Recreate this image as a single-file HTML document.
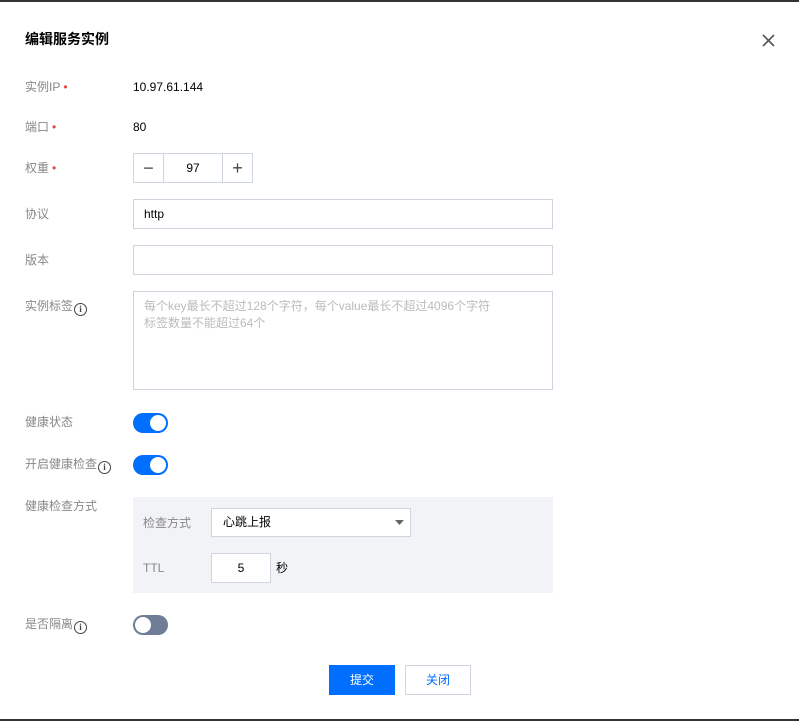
<!DOCTYPE html>
<html><head><meta charset="utf-8"><style>
*{box-sizing:border-box;margin:0;padding:0}
body{width:799px;height:721px;background:#fff;font-family:"Liberation Sans","Noto Sans CJK SC",sans-serif;font-size:12px;color:#000;position:relative;overflow:hidden}
.a{position:absolute}
.lbl{position:absolute;left:25px;color:#888;font-size:12px;line-height:16px}
.req{color:#e54545;margin-left:3px}
.val{position:absolute;left:133px;font-size:12px;line-height:16px;color:#000}
.inp{position:absolute;border:1px solid #cfd5de;background:#fff}
.sw{position:absolute;left:133px;width:35px;height:20px;border-radius:10px;background:#006eff}
.sw i{position:absolute;top:2px;right:2px;width:16px;height:16px;border-radius:50%;background:#fff}
.sw.off{background:#6f7e96}.sw.off i{left:2px;right:auto}
.info{display:inline-block;width:13px;height:13px;border:1.3px solid #444;border-radius:50%;font-size:9px;line-height:10px;text-align:center;color:#444;font-weight:bold;vertical-align:-2px;margin-left:1px;font-family:"Liberation Serif",serif}
</style></head><body>
<div class="a" style="left:0;top:0;width:799px;height:2px;background:#333"></div>
<div class="a" style="left:0;top:719px;width:799px;height:2px;background:#333"></div>
<div class="a" style="left:25px;top:30px;font-size:14px;font-weight:bold;line-height:18px">编辑服务实例</div>
<svg class="a" style="left:762px;top:34px" width="13" height="13" viewBox="0 0 13 13"><path d="M1 1L12 12M12 1L1 12" stroke="#555" stroke-width="1.6"/></svg>

<div class="lbl" style="top:79px">实例IP<span class="req">•</span></div>
<div class="val" style="top:79px">10.97.61.144</div>
<div class="lbl" style="top:119px">端口<span class="req">•</span></div>
<div class="val" style="top:119px">80</div>
<div class="lbl" style="top:160px">权重<span class="req">•</span></div>
<div class="inp" style="left:133px;top:153px;width:120px;height:30px;display:flex">
 <div style="width:30px;border-right:1px solid #cfd5de;text-align:center;line-height:28px;font-size:18px;color:#444">−</div>
 <div style="flex:1;text-align:center;line-height:28px">97</div>
 <div style="width:30px;border-left:1px solid #cfd5de;text-align:center;line-height:28px;font-size:18px;color:#444">+</div>
</div>
<div class="lbl" style="top:206px">协议</div>
<div class="inp" style="left:133px;top:199px;width:420px;height:30px;padding-left:10px;line-height:28px">http</div>
<div class="lbl" style="top:252px">版本</div>
<div class="inp" style="left:133px;top:245px;width:420px;height:30px"></div>
<div class="lbl" style="top:298px">实例标签<span class="info">i</span></div>
<div class="inp" style="left:133px;top:291px;width:420px;height:99px;padding:6px 10px;color:#bbb;line-height:17px">每个key最长不超过128个字符，每个value最长不超过4096个字符<br>标签数量不能超过64个</div>
<div class="lbl" style="top:414px">健康状态</div>
<div class="sw" style="top:413px"><i></i></div>
<div class="lbl" style="top:456px">开启健康检查<span class="info">i</span></div>
<div class="sw" style="top:455px"><i></i></div>
<div class="lbl" style="top:498px">健康检查方式</div>
<div class="a" style="left:133px;top:497px;width:420px;height:96px;background:#f2f3f6"></div>
<div class="a" style="left:143px;top:515px;color:#888;line-height:16px">检查方式</div>
<div class="inp" style="left:211px;top:508px;width:200px;height:29px;padding-left:11px;line-height:27px">心跳上报
 <svg style="position:absolute;right:6px;top:11px" width="9" height="6"><path d="M0 0H9L4.5 5Z" fill="#666"/></svg></div>
<div class="a" style="left:143px;top:560px;color:#888;line-height:16px">TTL</div>
<div class="inp" style="left:211px;top:553px;width:60px;height:30px;text-align:center;line-height:28px">5</div>
<div class="a" style="left:276px;top:560px;line-height:16px">秒</div>
<div class="lbl" style="top:616px">是否隔离<span class="info">i</span></div>
<div class="sw off" style="top:615px"><i></i></div>
<div class="a" style="left:329px;top:665px;width:66px;height:30px;background:#006eff;color:#fff;text-align:center;line-height:30px">提交</div>
<div class="inp" style="left:405px;top:665px;width:66px;height:30px;color:#006eff;text-align:center;line-height:28px">关闭</div>
</body></html>
